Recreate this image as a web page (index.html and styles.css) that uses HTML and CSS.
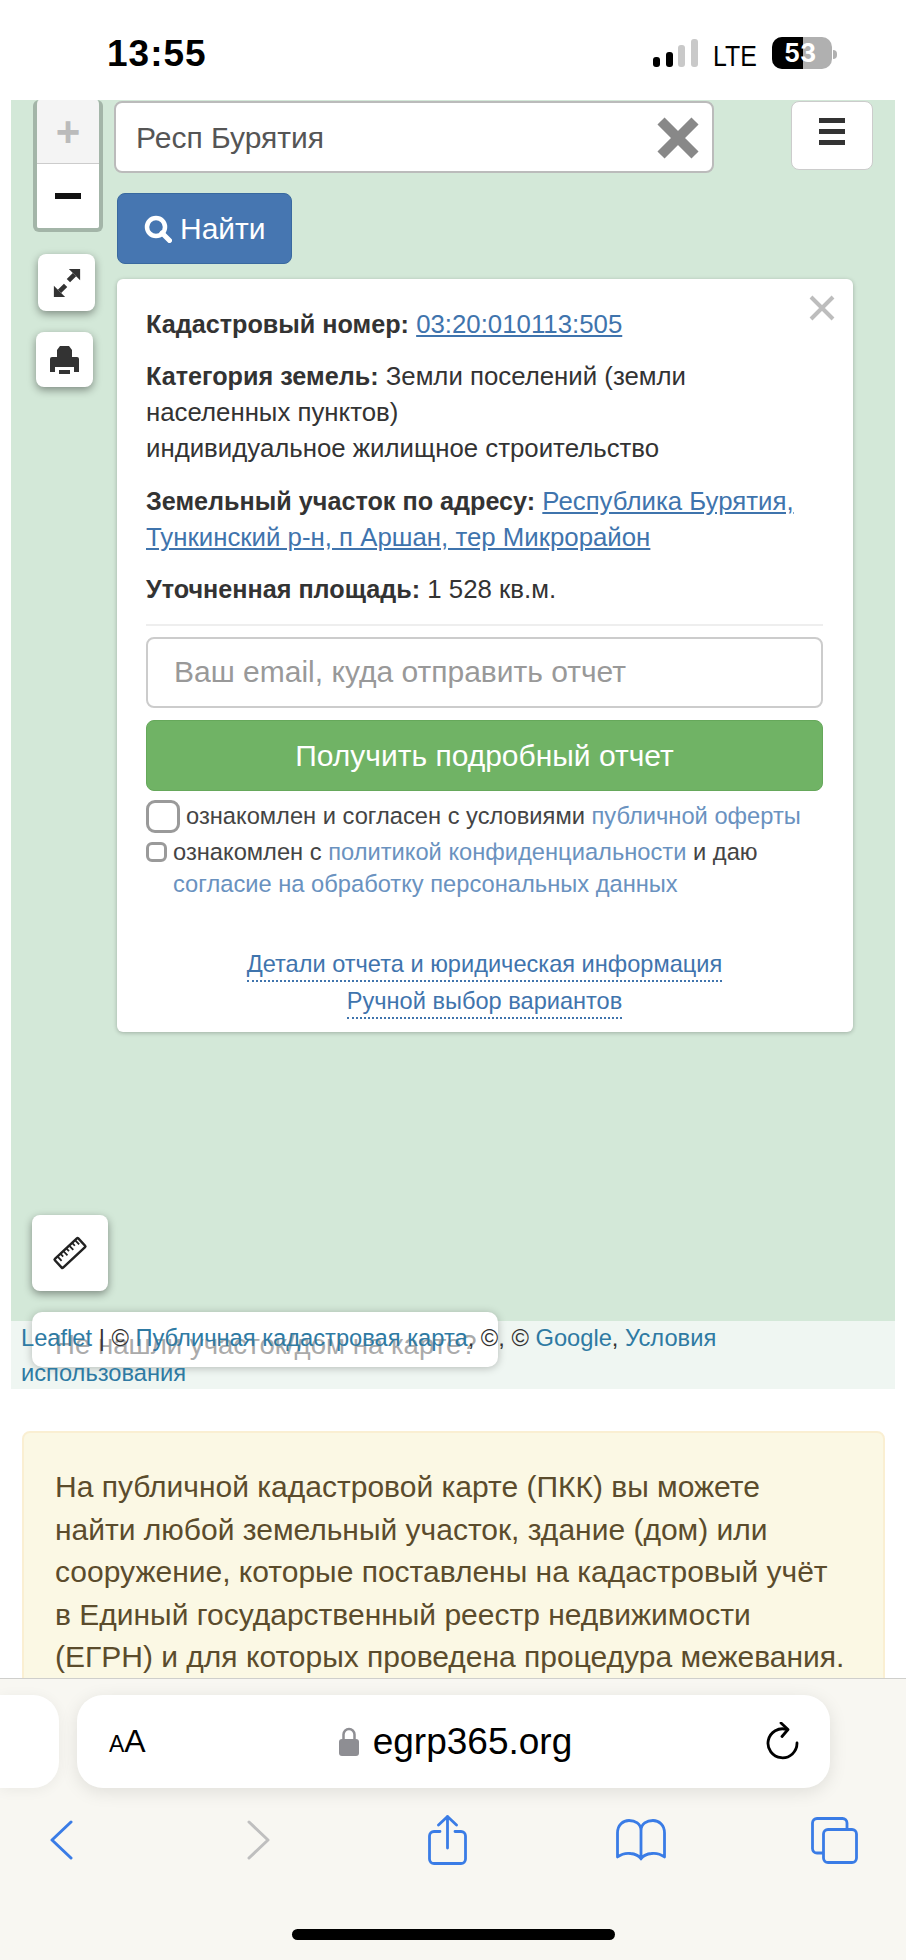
FILE: index.html
```html
<!DOCTYPE html>
<html lang="ru">
<head>
  <meta charset="UTF-8">
  <meta name="viewport" content="width=device-width, initial-scale=1.0">
  <title>Публичная кадастровая карта</title>
  <link rel="stylesheet" href="styles.css">
</head>
<body>
  <div class="phone">

    <!-- Status bar -->
    <div class="status">
      <div class="time">13:55</div>
      <div class="status-right">
        <div class="signal">
          <span class="bar bar1"></span>
          <span class="bar bar2"></span>
          <span class="bar bar3 off"></span>
          <span class="bar bar4 off"></span>
        </div>
        <div class="lte">LTE</div>
        <div class="battery"><span class="battery-fill"></span><span class="battery-num">53</span></div>
        <span class="battery-nub"></span>
      </div>
    </div>

    <!-- Page -->
    <div class="page">
      <div class="map">
        <div class="map-left">
          <div class="zoom">
            <div class="zoom-btn zoom-in">+</div>
            <div class="zoom-btn zoom-out"><span class="minus"></span></div>
          </div>
          <div class="ctl ctl-full">
            <svg width="30" height="30" viewBox="0 0 32 32"><path d="M30 1v12L18 1zM2 31V19l12 12z" fill="#333"/><path d="M24 7l-6.500 6.500M8 25l6.500-6.500" stroke="#333" stroke-width="5" fill="none"/></svg>
          </div>
          <div class="ctl ctl-print">
            <svg width="29" height="28" viewBox="0 0 29 28"><path d="M10 0h9l3 4v8H7V4z" fill="#333"/><path d="M2 11h25a2 2 0 0 1 2 2v13h-5v-5H5v5H0V13a2 2 0 0 1 2-2z" fill="#333"/><path d="M9 24h11v4H9z" fill="#333"/></svg>
          </div>
        </div>

        <div class="map-main">
          <div class="search-row">
            <div class="search">
              <input class="search-input" type="text" value="Респ Бурятия">
              <svg class="search-clear" width="44" height="44" viewBox="0 0 44 44"><path d="M5 5l34 34M39 5L5 39" stroke="#888" stroke-width="10" fill="none"/></svg>
            </div>
            <div class="menu-btn"><span></span><span></span><span></span></div>
          </div>

          <div class="find-btn">
            <svg width="28" height="28" viewBox="0 0 28 28"><circle cx="12" cy="12" r="9" stroke="#fff" stroke-width="4.500" fill="none"/><path d="M18 18l7.500 7.500" stroke="#fff" stroke-width="5" stroke-linecap="round"/></svg>
            Найти
          </div>

          <div class="popup">
            <svg class="popup-close" width="26" height="26" viewBox="0 0 26 26"><path d="M2 2l22 22M24 2L2 24" stroke="#bdbdbd" stroke-width="4" fill="none"/></svg>
            <p><b>Кадастровый номер:</b> <a href="#">03:20:010113:505</a></p>
            <p><b>Категория земель:</b> Земли поселений (земли населенных пунктов)<br>индивидуальное жилищное строительство</p>
            <p><b>Земельный участок по адресу:</b> <a href="#">Республика Бурятия, Тункинский р-н, п Аршан, тер Микрорайон</a></p>
            <p><b>Уточненная площадь:</b> 1 528 кв.м.</p>
            <div class="line"></div>
            <input class="email" type="text" placeholder="Ваш email, куда отправить отчет">
            <div class="report-btn">Получить подробный отчет</div>
            <div class="agree agree-big">
              <span class="check check-big"></span>
              <span>ознакомлен и согласен с условиями <a href="#">публичной оферты</a></span>
            </div>
            <div class="agree agree-small">
              <span class="check check-small"></span>
              <span>ознакомлен с <a href="#">политикой конфиденциальности</a> и даю<br><a href="#">согласие на обработку персональных данных</a></span>
            </div>
            <div class="more">
              <a href="#">Детали отчета и юридическая информация</a>
              <a href="#">Ручной выбор вариантов</a>
            </div>
          </div>
        </div>

        <div class="ctl ruler">
          <svg width="36" height="36" viewBox="0 0 36 36"><g transform="rotate(-43 18 18)" fill="none" stroke="#222" stroke-width="2.500"><rect x="2" y="12" width="32" height="12" rx="1"/><path d="M6.500 12v6M10.500 12v4M14.500 12v6M18.500 12v4M22.500 12v6M26.500 12v4M30.500 12v6" stroke-width="1.800"/></g></svg>
        </div>
      </div>

      <div class="attribution">
        <div class="not-found">Не нашли участок/дом на карте?</div>
        <div class="attribution-text"><a href="#">Leaflet</a> | © <a href="#">Публичная кадастровая карта</a>, ©, © <a href="#">Google</a>, <a href="#">Условия использования</a></div>
      </div>

      <div class="note">
        На публичной кадастровой карте (ПКК) вы можете найти любой земельный участок, здание (дом) или сооружение, которые поставлены на кадастровый учёт в Единый государственный реестр недвижимости (ЕГРН) и для которых проведена процедура межевания.
      </div>
    </div>

    <!-- Safari toolbar -->
    <div class="toolbar">
      <div class="url-row">
        <div class="prev-tab"></div>
        <div class="url-bar">
          <div class="aa"><span class="aa-small">A</span><span>A</span></div>
          <div class="url">
            <svg width="20" height="30" viewBox="0 0 20 30"><path d="M4.500 13V7.500a5.500 5.500 0 0 1 11 0V13" stroke="#8e8e93" stroke-width="2.500" fill="none"/><rect x="0" y="12" width="20" height="17" rx="3" fill="#8e8e93"/></svg>
            <span>egrp365.org</span>
          </div>
          <svg class="reload" width="34" height="40" viewBox="0 0 34 40"><path d="M21 7.500A14.500 14.500 0 1 0 31 21" stroke="#000" stroke-width="2.800" fill="none" stroke-linecap="round"/><path d="M15 1l7 6.500-6 7" stroke="#000" stroke-width="2.800" fill="none" stroke-linecap="round" stroke-linejoin="round"/></svg>
        </div>
      </div>
      <div class="nav">
        <div class="nav-item"><svg width="24" height="40" viewBox="0 0 24 40"><path d="M22 2L3 20l19 18" stroke="#3a7ce6" stroke-width="3" fill="none" stroke-linecap="round" stroke-linejoin="round"/></svg></div>
        <div class="nav-item"><svg class="nav-next" width="24" height="40" viewBox="0 0 24 40"><path d="M2 2l19 18L2 38" stroke="#bfbfbf" stroke-width="3" fill="none" stroke-linecap="round" stroke-linejoin="round"/></svg></div>
        <div class="nav-item"><svg width="39" height="50" viewBox="0 0 39 50"><path d="M12 16.500H6A4.500 4.500 0 0 0 1.500 21v23A4.500 4.500 0 0 0 6 48.500h27a4.500 4.500 0 0 0 4.500-4.500V21a4.500 4.500 0 0 0-4.500-4.500h-6M19.500 33V1.500M10.500 10l9-8.500 9 8.500" stroke="#3a7ce6" stroke-width="2.800" fill="none" stroke-linecap="round" stroke-linejoin="round"/></svg></div>
        <div class="nav-item"><svg width="50" height="42" viewBox="0 0 50 42"><path d="M1.500 38V14C1.500 6 7 1.500 13 1.500c6 0 12 3 12 10 0-7 6-10 12-10 6 0 11.500 4.500 11.500 12.500v24c-4-3-9-4-13-3.500-5 .5-8 2-10.500 5-2.500-3-5.500-4.500-10.500-5-4-.5-9 .5-13 3.500zM25 11.500V40" stroke="#3a7ce6" stroke-width="2.800" fill="none" stroke-linecap="round" stroke-linejoin="round"/></svg></div>
        <div class="nav-item"><svg width="47" height="47" viewBox="0 0 47 47"><path d="M12 36H6a4.500 4.500 0 0 1-4.500-4.500V6A4.500 4.500 0 0 1 6 1.500h25.500A4.500 4.500 0 0 1 36 6v6" stroke="#3a7ce6" stroke-width="2.800" fill="none"/><rect x="12.500" y="12.500" width="33" height="33" rx="4.500" stroke="#3a7ce6" stroke-width="2.800" fill="none"/></svg></div>
      </div>
      <div class="home-bar"></div>
    </div>

  </div>
</body>
</html>
```

FILE: styles.css
```css
* {
  box-sizing: border-box;
}
html, body {
  margin: 0;
  padding: 0;
  background-color: #fff;
}
body {
  font-family: "Liberation Sans", Arial, sans-serif;
  color: #333;
}
.phone {
  width: 906px;
  height: 1960px;
  display: flex;
  flex-direction: column;
  overflow: hidden;
}

/* status bar */
.status {
  flex: 0 0 100px;
  display: flex;
  justify-content: space-between;
  padding: 32px 69px 0 107px;
  background-color: #fff;
}
.time {
  font-size: 37px;
  font-weight: bold;
  line-height: 44px;
  letter-spacing: 1px;
  color: #000;
}
.status-right {
  display: flex;
  align-items: flex-start;
  padding-top: 5px;
}
.signal {
  display: flex;
  align-items: flex-end;
  gap: 5.700px;
  height: 28px;
  margin-top: 2px;
}
.bar {
  width: 7px;
  border-radius: 3px;
  background-color: #000;
}
.bar.off {
  background-color: #c9c9c9;
}
.bar1 { height: 10px; }
.bar2 { height: 15px; }
.bar3 { height: 22px; }
.bar4 { height: 28px; }
.lte {
  margin: 5px 0 0 15px;
  width: 59px;
  font-size: 30px;
  line-height: 28px;
  color: #000;
  transform: scaleX(0.83);
  transform-origin: left;
}
.battery {
  position: relative;
  width: 60px;
  height: 32px;
  border-radius: 10px;
  overflow: hidden;
  background-color: #b0b0b0;
}
.battery-fill {
  position: absolute;
  left: 0;
  top: 0;
  width: 31px;
  height: 32px;
  background-color: #000;
}
.battery-num {
  position: absolute;
  left: 12px;
  top: 0;
  font-family: Inter, "Liberation Sans", sans-serif;
  font-size: 25px;
  font-weight: bold;
  line-height: 32px;
  color: #fff;
}
.battery-nub {
  width: 4px;
  height: 9px;
  margin: 13px 0 0 1px;
  border-radius: 0 5px 5px 0;
  background-color: #b0b0b0;
}

/* page */
.page {
  flex: 1;
  min-height: 0;
  overflow: hidden;
  padding: 0 11px;
}
.map {
  position: relative;
  height: 1221px;
  display: flex;
  gap: 11px;
  padding-left: 22px;
  background-color: #d3e8d8;
}
.map-left {
  flex: 0 0 70px;
}
.zoom {
  width: 70px;
  height: 132px;
  border: 4px solid #a3b5a8;
  border-top: 0;
  border-radius: 6px;
  overflow: hidden;
}
.zoom-btn {
  display: flex;
  align-items: center;
  justify-content: center;
  height: 64px;
  background-color: #fff;
}
.zoom-in {
  background-color: #f4f4f4;
  border-bottom: 1px solid #ccc;
  color: #bbb;
  font-size: 42px;
  font-weight: bold;
}
.minus {
  width: 26px;
  height: 6px;
  background-color: #111;
}
.ctl {
  display: flex;
  align-items: center;
  justify-content: center;
  background-color: #fff;
  border-radius: 8px;
  box-shadow: 0 3px 8px rgba(0, 0, 0, 0.4);
}
.ctl-full {
  width: 57px;
  height: 57px;
  margin: 22px 0 0 5px;
}
.ctl-print {
  width: 57px;
  height: 55px;
  margin: 21px 0 0 3px;
}
.ruler {
  position: absolute;
  left: 21px;
  top: 1115px;
  width: 76px;
  height: 76px;
}
.map-main {
  flex: 0 0 759px;
}
.search-row {
  display: flex;
  justify-content: space-between;
  align-items: flex-start;
  margin-top: 1px;
}
.search {
  position: relative;
  width: 600px;
  height: 72px;
}
.search-input {
  width: 100%;
  height: 100%;
  padding: 2px 80px 0 20px;
  border: 2px solid #bbb;
  border-radius: 8px;
  background-color: #fff;
  font-family: inherit;
  font-size: 30px;
  color: #555;
  outline: none;
}
.search-clear {
  position: absolute;
  right: 14px;
  top: 15px;
}
.menu-btn {
  display: flex;
  flex-direction: column;
  justify-content: center;
  align-items: center;
  gap: 6px;
  width: 82px;
  height: 69px;
  padding-bottom: 8px;
  border: 1px solid #ccc;
  border-radius: 8px;
  background-color: #fff;
}
.menu-btn span {
  width: 26px;
  height: 5px;
  background-color: #333;
}
.find-btn {
  display: flex;
  align-items: center;
  gap: 8px;
  width: 175px;
  height: 71px;
  margin: 20px 0 0 3px;
  padding-left: 26px;
  border: 1px solid #39699f;
  border-radius: 8px;
  background-color: #4676b1;
  color: #fff;
  font-size: 30px;
}
.popup {
  position: relative;
  width: 736px;
  height: 753px;
  margin: 15px 0 0 3px;
  padding: 27px 30px 0 29px;
  border-radius: 6px;
  background-color: #fff;
  box-shadow: 0 1px 4px rgba(0, 0, 0, 0.25);
  font-size: 25.800px;
  line-height: 36px;
}
.popup p {
  margin: 0 0 16.400px;
}
.popup b {
  font-size: 25.200px;
}
.popup a {
  color: #3f74ad;
}
.popup-close {
  position: absolute;
  right: 18px;
  top: 16px;
}
.line {
  height: 2px;
  margin-top: 13px;
  background-color: #eee;
}
.email {
  display: block;
  width: 100%;
  height: 71px;
  margin-top: 11px;
  padding: 0 26px;
  border: 2px solid #ccc;
  border-radius: 8px;
  font-family: inherit;
  font-size: 30px;
  outline: none;
}
.email::placeholder {
  color: #999;
}
.report-btn {
  height: 71px;
  margin-top: 12px;
  border: 1px solid #66a85b;
  border-radius: 8px;
  background-color: #70b365;
  color: #fff;
  font-size: 30px;
  line-height: 69px;
  text-align: center;
}
.agree {
  display: flex;
  font-size: 23.700px;
  line-height: 32px;
  color: #444;
}
.agree a {
  color: #6a92bf;
  text-decoration: none;
}
.agree-big {
  align-items: center;
  gap: 6px;
  margin-top: 9px;
}
.agree-small {
  gap: 6px;
  margin-top: 3px;
}
.check {
  flex: none;
  background-color: #fff;
  border-style: solid;
  border-color: #9a9a9a;
}
.check-big {
  width: 34px;
  height: 33px;
  border-width: 3px;
  border-radius: 9px;
}
.check-small {
  width: 21px;
  height: 20px;
  margin-top: 6px;
  border-width: 3px;
  border-radius: 6px;
}
.more {
  display: flex;
  flex-direction: column;
  align-items: center;
  gap: 3px;
  margin-top: 48px;
  font-size: 23.600px;
  line-height: 32px;
}
.more a {
  text-decoration: none;
  border-bottom: 2px dotted #3f74ad;
}

/* attribution under the map */
.attribution {
  position: relative;
  height: 68px;
  padding: 0 100px 0 10px;
  background-color: #eff6f2;
  font-size: 23.700px;
  line-height: 35px;
}
.attribution a {
  color: #2e7aa3;
  text-decoration: none;
}
.attribution-text {
  position: relative;
}
.not-found {
  position: absolute;
  left: 21px;
  top: -9px;
  width: 466px;
  height: 55px;
  padding: 15px 0 0 23px;
  border-radius: 10px;
  background-color: #fff;
  box-shadow: 0 1px 8px rgba(0, 0, 0, 0.25);
  color: #aaa;
  font-size: 27.600px;
  white-space: nowrap;
}
.note {
  margin: 42px 10px 0 11px;
  padding: 33px 36px 40px 31px;
  border: 2px solid #faefd2;
  border-radius: 8px;
  background-color: #fbf8e4;
  color: #5b4c2c;
  font-size: 30px;
  line-height: 42.500px;
}

/* safari toolbar */
.toolbar {
  flex: 0 0 282px;
  display: flex;
  flex-direction: column;
  border-top: 1px solid #cfcfcc;
  background-color: #f8f7f2;
}
.url-row {
  display: flex;
  gap: 18px;
  margin-top: 16px;
}
.prev-tab {
  flex: 0 0 59px;
  height: 93px;
  border-radius: 0 26px 26px 0;
  background-color: #fff;
  box-shadow: 0 2px 14px rgba(0, 0, 0, 0.06);
}
.url-bar {
  display: flex;
  align-items: center;
  justify-content: space-between;
  width: 753px;
  height: 93px;
  padding: 0 30px 0 32px;
  border-radius: 26px;
  background-color: #fff;
  box-shadow: 0 4px 18px rgba(0, 0, 0, 0.1);
  color: #000;
}
.aa {
  font-size: 32px;
  width: 44px;
  white-space: nowrap;
}
.aa-small {
  font-size: 23px;
}
.url {
  display: flex;
  align-items: center;
  gap: 14px;
  margin-right: 8px;
  font-size: 37px;
}
.nav {
  display: flex;
  justify-content: space-between;
  margin-top: 24px;
  padding: 0 42px 0 31px;
}
.nav-item {
  display: flex;
  justify-content: center;
  align-items: center;
  width: 60px;
  height: 56px;
}
.nav-next {
  margin-left: 10px;
}
.home-bar {
  width: 323px;
  height: 11px;
  margin: 61px auto 0;
  border-radius: 6px;
  background-color: #000;
}
```
